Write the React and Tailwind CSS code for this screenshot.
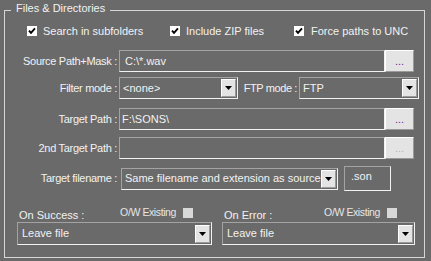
import React from "react";

const sunken = "border border-t-[#a3a3a3] border-l-[#a3a3a3] border-b-[#f2f2f2] border-r-[#f2f2f2]";
const raised = "border border-t-white border-l-white border-b-[#9a9a9a] border-r-[#9a9a9a] bg-[#e4e4e4]";

function Arrow() {
  return (
    <span className={`flex h-[18px] w-[15px] shrink-0 items-center justify-center ${raised}`}>
      <svg width="7" height="4" viewBox="0 0 7 4">
        <polygon points="0,0 7,0 3.5,4" fill="#000" />
      </svg>
    </span>
  );
}

function Select({ value, className }) {
  return (
    <div className={`flex h-[22px] items-center justify-between pl-[3px] pr-[1px] ${sunken} ${className}`}>
      <span className="truncate">{value}</span>
      <Arrow />
    </div>
  );
}

function Check({ checked, disabled }) {
  return (
    <span
      className={`flex h-[10px] w-[10px] shrink-0 items-center justify-center ${disabled ? "bg-[#d8d8d8]" : "bg-white"}`}
    >
      {checked && (
        <svg width="8" height="8" viewBox="0 0 8 8">
          <path d="M1 3.6 L3 5.8 L7 1.4" stroke="#000" strokeWidth="1.9" fill="none" />
        </svg>
      )}
    </span>
  );
}

function Dots({ disabled }) {
  return (
    <button
      type="button"
      className={`flex h-[22px] w-[29px] items-center justify-center ${raised} ${disabled ? "text-[#b4b4b4]" : "text-[#7a2a9a]"}`}
    >
      ...
    </button>
  );
}

function Label({ children }) {
  return <span className="w-[112px] shrink-0 self-center text-right tracking-[-0.3px]">{children}</span>;
}

function Outcome({ title, width, gap }) {
  return (
    <div className={width}>
      <div className="flex h-[15px] justify-between">
        <span className="self-end pl-[2px] leading-[13px]">{title}</span>
        <span className={`flex items-center gap-[7px] self-start ${gap}`}>
          <span className="text-[10.5px] leading-[11px] tracking-[-0.4px] text-[#e6e6e6]">O/W Existing</span>
          <Check disabled />
        </span>
      </div>
      <div className={`flex h-[23px] items-center justify-between pl-[4px] pr-[1px] ${sunken}`}>
        <span>Leave file</span>
        <Arrow />
      </div>
    </div>
  );
}

export default function App() {
  return (
    <div className="min-h-screen bg-[#6a6a6a] pl-[4px] pr-[6px] pt-[2px] font-['Liberation_Sans',Arial,sans-serif] text-[11px] text-[#f2f2f2]">
      <fieldset className="border border-[#d6d6d6] pb-[12px]">
        <legend className="ml-[6px] px-[5px] pb-[3px] leading-[13px]">Files &amp; Directories</legend>

        {/* options */}
        <div className="mt-[2px] flex h-[22px] items-center pl-[22px]">
          <label className="flex w-[143px] items-center gap-[6px]">
            <Check checked />
            Search in subfolders
          </label>
          <label className="flex w-[124px] items-center gap-[6px]">
            <Check checked />
            Include ZIP files
          </label>
          <label className="flex items-center gap-[7px]">
            <Check checked />
            Force paths to UNC
          </label>
        </div>

        <div className="mt-[8px] flex h-[22px]">
          <Label>Source Path+Mask :</Label>
          <div className={`ml-[2px] flex w-[266px] items-center pl-[5px] ${sunken}`}>{"C:\\*.wav"}</div>
          <Dots />
        </div>

        <div className="mt-[5px] flex h-[22px] items-center">
          <Label>Filter mode :</Label>
          <Select className="ml-[2px] w-[119px]" value="<none>" />
          <span className="w-[59px] text-right tracking-[-0.4px]">FTP mode :</span>
          <Select className="ml-[2px] w-[120px]" value="FTP" />
        </div>

        <div className="mt-[9px] flex h-[22px]">
          <Label>Target Path :</Label>
          <div className={`ml-[2px] flex w-[266px] items-center pl-[2px] ${sunken}`}>{"F:\\SONS\\"}</div>
          <Dots />
        </div>

        <div className="mt-[7px] flex h-[22px]">
          <Label>2nd Target Path :</Label>
          <div className={`ml-[2px] w-[266px] ${sunken}`} />
          <Dots disabled />
        </div>

        <div className="mt-[7px] flex h-[25px] items-center">
          <Label>Target filename :</Label>
          <Select className="ml-[4px] w-[217px]" value="Same filename and extension as source" />
          <div className={`ml-[6px] h-[25px] w-[47px] pl-[6px] pt-[3px] leading-[13px] ${sunken}`}>.son</div>
        </div>

        {/* success / error handling */}
        <div className="mt-[16px] flex gap-[10px] pl-[12px]">
          <Outcome title="On Success :" width="w-[195px]" gap="mr-[19px]" />
          <Outcome title="On Error :" width="w-[193px]" gap="mr-[18px]" />
        </div>
      </fieldset>
    </div>
  );
}
